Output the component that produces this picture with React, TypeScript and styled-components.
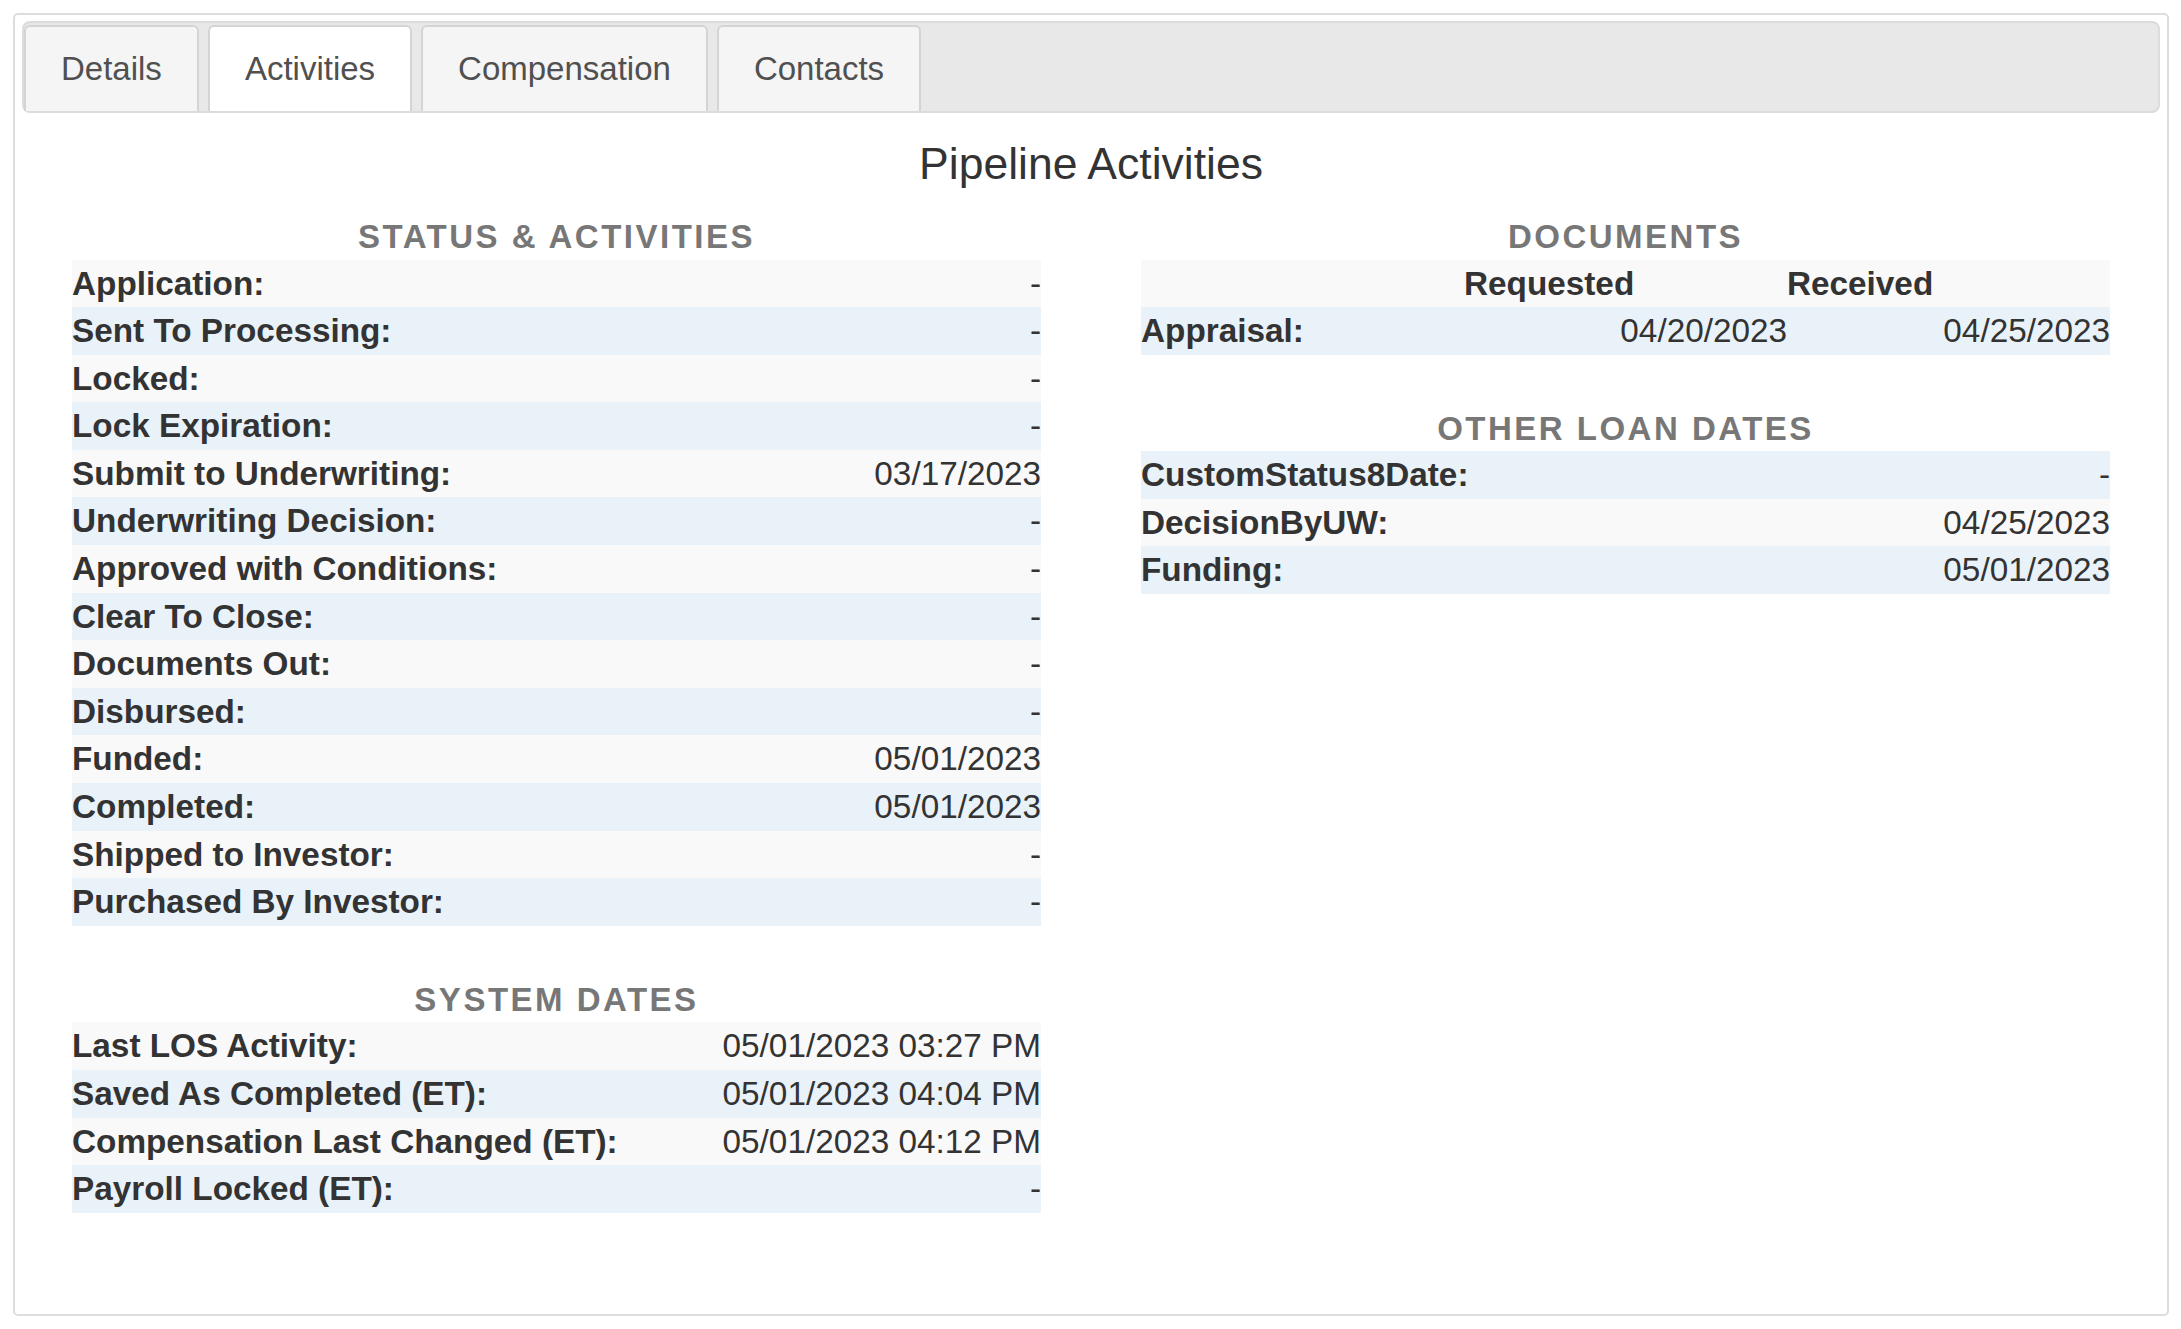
import React from "react";
import styled, { createGlobalStyle } from "styled-components";

const GlobalStyle = createGlobalStyle`
  body {
    margin: 0;
    background: #fff;
    font-family: "Liberation Sans", Arial, sans-serif;
    color: #333;
  }
`;

const Panel = styled.div`
  margin: 13px 12px 13px 13px;
  border: 2px solid #ddd;
  border-radius: 5px;
  padding: 6px 7px 49px;
`;

const TabBar = styled.ul`
  display: flex;
  align-items: flex-end;
  gap: 9px;
  height: 92px;
  box-sizing: border-box;
  margin: 0;
  padding: 0;
  list-style: none;
  background: #e8e8e8;
  border: 2px solid #dcdcdc;
  border-radius: 8px;
`;

const Tab = styled.li<{ $active?: boolean }>`
  height: 86px;
  box-sizing: border-box;
  display: flex;
  align-items: center;
  padding: 0 35px;
  border: 2px solid #d4d4d4;
  border-bottom: none;
  border-radius: 6px 6px 0 0;
  background: ${(p) => (p.$active ? "#fff" : "#f5f5f5")};
  color: #505050;
  font-size: 33px;
`;

const Title = styled.h3`
  margin: 26px 0 0;
  text-align: center;
  font-size: 44.5px;
  line-height: 49px;
  font-weight: normal;
  color: #333;
`;

const Columns = styled.div`
  display: grid;
  grid-template-columns: 1fr 1fr;
  column-gap: 100px;
  align-items: start;
  margin-top: 27px;
  padding: 0 50px;
`;

const Section = styled.div`
  margin-bottom: 52px;
`;

const Heading = styled.h4`
  margin: 0 0 2.5px;
  padding-top: 2px;
  text-align: center;
  font-size: 33px;
  line-height: 40px;
  font-weight: bold;
  letter-spacing: 2.5px;
  color: #777;
`;

const Table = styled.table`
  width: 100%;
  border-collapse: collapse;
  table-layout: fixed;
  font-size: 33.3px;
  line-height: 47.6px;
  color: #333;
`;

const Row = styled.tr<{ $blue?: boolean }>`
  background: ${(p) => (p.$blue ? "#e9f2f9" : "#f9f9f9")};
`;

const Label = styled.td`
  padding: 0;
  font-weight: bold;
  text-align: left;
  white-space: nowrap;
`;

const Value = styled.td`
  padding: 0;
  text-align: right;
  white-space: nowrap;
`;

const ColHead = styled.th`
  padding: 0;
  font-weight: bold;
  text-align: left;
`;

type Item = [string, string];

const status: Item[] = [
  ["Application:", "-"],
  ["Sent To Processing:", "-"],
  ["Locked:", "-"],
  ["Lock Expiration:", "-"],
  ["Submit to Underwriting:", "03/17/2023"],
  ["Underwriting Decision:", "-"],
  ["Approved with Conditions:", "-"],
  ["Clear To Close:", "-"],
  ["Documents Out:", "-"],
  ["Disbursed:", "-"],
  ["Funded:", "05/01/2023"],
  ["Completed:", "05/01/2023"],
  ["Shipped to Investor:", "-"],
  ["Purchased By Investor:", "-"],
];

const system: Item[] = [
  ["Last LOS Activity:", "05/01/2023 03:27 PM"],
  ["Saved As Completed (ET):", "05/01/2023 04:04 PM"],
  ["Compensation Last Changed (ET):", "05/01/2023 04:12 PM"],
  ["Payroll Locked (ET):", "-"],
];

const otherDates: Item[] = [
  ["CustomStatus8Date:", "-"],
  ["DecisionByUW:", "04/25/2023"],
  ["Funding:", "05/01/2023"],
];

const tabs = ["Details", "Activities", "Compensation", "Contacts"];

const DateTable = ({ items, blueFirst }: { items: Item[]; blueFirst?: boolean }) => (
  <Table>
    <tbody>
      {items.map(([label, value], i) => (
        <Row key={label} $blue={blueFirst ? i % 2 === 0 : i % 2 === 1}>
          <Label>{label}</Label>
          <Value>{value}</Value>
        </Row>
      ))}
    </tbody>
  </Table>
);

export default function App() {
  return (
    <>
      <GlobalStyle />
      <Panel>
        <TabBar>
          {tabs.map((t) => (
            <Tab key={t} $active={t === "Activities"}>
              {t}
            </Tab>
          ))}
        </TabBar>
        <Title>Pipeline Activities</Title>
        <Columns>
          <div>
            <Section>
              <Heading>STATUS &amp; ACTIVITIES</Heading>
              <DateTable items={status} />
            </Section>
            <Section>
              <Heading>SYSTEM DATES</Heading>
              <DateTable items={system} />
            </Section>
          </div>
          <div>
            <Section>
              <Heading>DOCUMENTS</Heading>
              <Table>
                <tbody>
                  <Row>
                    <ColHead />
                    <ColHead>Requested</ColHead>
                    <ColHead>Received</ColHead>
                  </Row>
                  <Row $blue>
                    <Label>Appraisal:</Label>
                    <Value>04/20/2023</Value>
                    <Value>04/25/2023</Value>
                  </Row>
                </tbody>
              </Table>
            </Section>
            <Section>
              <Heading>OTHER LOAN DATES</Heading>
              <DateTable items={otherDates} blueFirst />
            </Section>
          </div>
        </Columns>
      </Panel>
    </>
  );
}
